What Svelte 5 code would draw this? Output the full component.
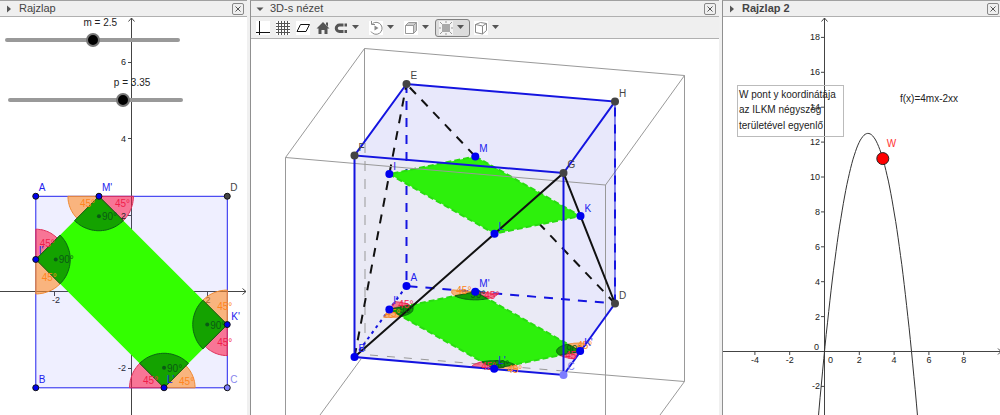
<style>
	:global(body) {
		margin: 0;
		background: #f0f0f0;
		font-family: 'Liberation Sans', Arial, sans-serif;
	}

	.views {
		display: grid;
		grid-template-columns: 247fr 469fr 278fr;
		gap: 3px;
	}

	.view {
		min-width: 0;
		background: #fff;
		border-top: 1px solid #a0a0a0;
	}

	.view + .view {
		border-left: 1px solid #909090;
	}

	header {
		display: flex;
		align-items: center;
		height: 15px;
		padding: 0 3px 0 4px;
		background: #efefef;
		border-bottom: 1px solid #b0b0b0;
	}

	h2 {
		flex: 1;
		margin: 0 0 0 5px;
		font-size: 11px;
		line-height: 15px;
		font-weight: normal;
		color: #444;
	}

	h2.active {
		font-weight: bold;
	}

	.view:last-child header {
		padding-right: 1px;
	}

	button {
		display: flex;
		align-items: center;
		box-sizing: border-box;
		padding: 0;
		border: 0;
		background: none;
	}

	button svg {
		display: block;
	}

	.close {
		justify-content: center;
		width: 12px;
		height: 12px;
		border: 1px solid #888;
		border-radius: 2px;
	}

	.toolbar {
		display: flex;
		align-items: center;
		height: 21px;
		padding-left: 5px;
		background: #efefef;
		border-bottom: 1px solid #b0b0b0;
	}

	.tools {
		display: flex;
		gap: 6px;
	}

	.menu-tool {
		gap: 4px;
		width: 35px;
		height: 18px;
		padding: 0 3px;
		border: 1px solid transparent;
		border-radius: 3px;
	}

	.menu-tool.selected {
		border-color: #808080;
		background: #dcdcdc;
	}

	.canvas {
		position: relative;
	}

	.canvas > svg {
		display: block;
		width: 100%;
		height: auto;
	}

	.slider {
		position: absolute;
	}

	.slider label {
		display: block;
		font-size: 10px;
		line-height: 12px;
		color: #222;
		white-space: nowrap;
	}

	input[type='range'] {
		display: block;
		width: 100%;
		height: 14px;
		margin: 4px 0 0;
		appearance: none;
		background: none;
	}

	input[type='range']::-webkit-slider-runnable-track {
		height: 4px;
		border-radius: 2px;
		background: #999;
	}

	input[type='range']::-webkit-slider-thumb {
		appearance: none;
		box-sizing: border-box;
		width: 14px;
		height: 14px;
		margin-top: -5px;
		border: 2px solid #777;
		border-radius: 50%;
		background: #000;
	}

	text {
		font-size: 10px;
		fill: #222;
	}

	.tick {
		font-size: 9px;
	}

	.end {
		text-anchor: end;
	}

	.middle {
		text-anchor: middle;
	}

	.axis {
		fill: none;
		stroke: #444;
	}

	.square {
		fill: rgba(100, 100, 255, 0.1);
		stroke: #2222ee;
	}

	.green {
		fill: #33ff00;
	}

	.right-angle {
		fill: rgba(0, 100, 0, 0.6);
		stroke: #0a6414;
	}

	.pink {
		fill: rgba(255, 16, 64, 0.55);
		stroke: #e0305a;
	}

	.orange {
		fill: rgba(255, 140, 40, 0.6);
		stroke: #f08a30;
	}

	.pink-text {
		fill: #f01e4b;
	}

	.orange-text {
		fill: #ff8420;
	}

	.green-text {
		fill: #0a5a14;
	}

	.blue-text {
		fill: #2222ee;
	}

	.gray-text {
		fill: #444;
	}

	.pale-text {
		fill: #8888ee;
	}

	.dot {
		stroke: #111;
	}

	.blue-dot {
		fill: #0000ee;
	}

	.gray-dot {
		fill: #444;
	}

	.pale-dot {
		fill: #7d7dff;
	}

	.frame {
		fill: none;
		stroke: #999;
	}

	.edge {
		fill: none;
		stroke: #1414e0;
		stroke-width: 2;
	}

	.line {
		fill: none;
		stroke: #111;
		stroke-width: 2;
	}

	.long-dash {
		stroke-dasharray: 9 8;
	}

	.short-dash {
		stroke-dasharray: 3 4;
	}

	.section {
		fill: #2df00c;
		stroke: #29dc10;
		stroke-width: 2;
		stroke-dasharray: 6 3;
	}

	.note {
		fill: none;
		stroke: #bbb;
	}

	.curve {
		fill: none;
		stroke: #333;
	}

	.w-point {
		fill: #f00;
		stroke: #222;
	}

	.w-text {
		fill: #f33;
	}
</style>

<script>
	let m = 2.5
	let p = 3.35

	// flat drawing: origin and pixels per unit
	const flat = ([x, y]) => [131.5 + x * 38.3, 292 - y * 38.3]
	const graph = ([x, y]) => [824.5 + x * 17.4, 351.5 - y * 17.45]

	const cube = {
		A: [406.5, 286], B: [354.5, 357], C: [563.5, 375], D: [615, 303.5],
		E: [406.5, 84], F: [354.5, 155.5], G: [563.5, 173], H: [615, 101.5]
	}

	const mix = (a, b, t) => [a[0] + (b[0] - a[0]) * t, a[1] + (b[1] - a[1]) * t]
	const poly = points => points.map(([x, y]) => x.toFixed(1) + ',' + y.toFixed(1)).join(' ')
	const face = names => poly(names.split('').map(n => cube[n]))

	const sector = ([cx, cy], from, to, r) => {
		const points = [[cx, cy]]
		for (let a = from; a <= to; a += 3) {
			points.push([cx + r * Math.cos(a * Math.PI / 180), cy + r * Math.sin(a * Math.PI / 180)])
		}
		return points
	}

	$: side = 2 * m
	$: t = Math.max(0, 1 - p / side)
	$: corners = [[-m, m], [-m, -m], [m, -m], [m, m]]

	// base plane of the cube, from the flat coordinates
	$: floor = ([x, y]) => {
		const u = (x + m) / side
		const v = (m - y) / side
		const {A, B, D} = cube
		return [
			A[0] + (D[0] - A[0]) * u + (B[0] - A[0]) * v,
			A[1] + (D[1] - A[1]) * u + (B[1] - A[1]) * v
		]
	}

	$: vertices = [
		{name: "M'", at: [-m + side * t, m], dir: 270, pinkR: 0.9, orangeR: 0.81, pink: [16, 11], orange: [-19, 11], label: [3, -5]},
		{name: "I'", at: [-m, m - side * t], dir: 0, pinkR: 0.79, orangeR: 0.9, pink: [4, -12], orange: [6, 22], label: [3, -5]},
		{name: "L'", at: [m - side * t, -m], dir: 90, pinkR: 0.9, orangeR: 0.81, pink: [-21, -4], orange: [15, -3], label: [3, -5]},
		{name: "K'", at: [m, -m + side * t], dir: 180, pinkR: 0.81, orangeR: 0.9, pink: [-10, 21], orange: [-10, -15], label: [4, -5]}
	]

	$: base = [vertices[0], vertices[3], vertices[2], vertices[1]].map(v => floor(v.at))
	$: upper = {
		M: mix(cube.E, cube.D, t),
		K: mix(cube.G, cube.D, t),
		L: mix(cube.G, cube.B, t),
		I: mix(cube.E, cube.B, t)
	}

	const baseText = [
		{pink: [9, 7], orange: [-19, 2], right: [-5, 6]},
		{pink: [9, -1], orange: [-4, 8], right: [10, 4]},
		{pink: [-13, 1], orange: [13, 4], right: [0, -1]},
		{pink: [-15, 8], orange: [-3, -2], right: [-14, 2]}
	]

	$: f = x => 4 * m * x - 2 * x * x
	$: curve = poly(Array.from({length: 141}, (_, i) => -2 + i * 0.07).map(x => graph([x, f(x)])))
	$: w = graph([p, f(p)])

	const thumbOffset = value => `margin-left: calc(${value / 5 * 92}% - 2px)`

	const flatLabels = [['A', 'blue'], ['B', 'blue'], ['C', 'pale'], ['D', 'gray']]
</script>

<main class="views">
	<section class="view">
		<header>
			<button aria-label="Stílussáv"><svg width="10" height="10"><path d="M3 1.500v7l4-3.500z" fill="#555"/></svg></button>
			<h2>Rajzlap</h2>
			<button class="close" aria-label="Bezárás"><svg width="8" height="8"><path d="M1.500 1.500l5 5m0-5l-5 5" stroke="#555"/></svg></button>
		</header>
		<div class="canvas">
			<svg viewBox="0 17 247 398">
				<path class="axis" d="M0 291.500H246M242.500 288.500l3.500 3-3.500 3M131.500 415V18M128.500 21.500l3-3.500 3 3.500"/>
				<path class="axis" d="M54.500 292v4M207.500 292v4M128 62.500h3M128 138.500h3M128 215.500h3M128 368.500h3"/>
				<text class="tick middle" x="56" y="303">-2</text>
				<text class="tick middle" x="208" y="303">2</text>
				<text class="tick end" x="126" y="65">6</text>
				<text class="tick end" x="126" y="142">4</text>
				<text class="tick end" x="126" y="371">-2</text>

				<polygon class="square" points={poly(corners.map(flat))}/>
				<polygon class="green" points={poly([vertices[0], vertices[3], vertices[2], vertices[1]].map(v => flat(v.at)))}/>
				{#each vertices as v}
					<polygon class="pink" points={poly(sector(v.at, v.dir + 45, v.dir + 90, v.pinkR).map(flat))}/>
					<polygon class="orange" points={poly(sector(v.at, v.dir - 90, v.dir - 45, v.orangeR).map(flat))}/>
					<polygon class="right-angle" points={poly(sector(v.at, v.dir - 45, v.dir + 45, 0.9).map(flat))}/>
				{/each}
				<text class="tick end" x="126" y="219">2</text>
				{#each vertices as v}
					{@const [x, y] = flat(v.at)}
					{@const dx = 20 * Math.cos(v.dir * Math.PI / 180)}
					{@const dy = -20 * Math.sin(v.dir * Math.PI / 180)}
					<circle cx={x + dx} cy={y + dy} r="2" fill="#0a5a14"/>
					<text class="green-text" x={x + dx + 3} y={y + dy + 4}>90°</text>
					<text class="pink-text" x={x + v.pink[0]} y={y + v.pink[1]}>45°</text>
					<text class="orange-text" x={x + v.orange[0]} y={y + v.orange[1]}>45°</text>
					<circle class="dot blue-dot" cx={x} cy={y} r="3"/>
					<text class="blue-text" x={x + v.label[0]} y={y + v.label[1]}>{v.name}</text>
				{/each}
				{#each flatLabels as [name, tone], i}
					{@const [x, y] = flat(corners[i])}
					<circle class="dot {tone}-dot" cx={x} cy={y} r="3"/>
					<text class="{tone}-text" x={x + 3} y={y - 5}>{name}</text>
				{/each}
			</svg>
			<div class="slider" style="left: {5 / 2.47}%; top: 0%; width: {175 / 2.47}%">
				<label for="m" style={thumbOffset(m)}>m = {m}</label>
				<input id="m" type="range" min="0" max="5" step="0.05" bind:value={m}>
			</div>
			<div class="slider" style="left: {8 / 2.47}%; top: {60 / 3.98}%; width: {175 / 2.47}%">
				<label for="p" style={thumbOffset(p)}>p = {p}</label>
				<input id="p" type="range" min="0" max="5" step="0.05" bind:value={p}>
			</div>
		</div>
	</section>

	<section class="view">
		<header>
			<button aria-label="Stílussáv"><svg width="10" height="10"><path d="M1.500 3.500h7L5 7z" fill="#555"/></svg></button>
			<h2>3D-s nézet</h2>
			<button class="close" aria-label="Bezárás"><svg width="8" height="8"><path d="M1.500 1.500l5 5m0-5l-5 5" stroke="#555"/></svg></button>
		</header>
		<div class="toolbar">
			<div class="tools">
				<button aria-label="Tengelyek"><svg width="14" height="14"><path d="M0 0h14v14H0z" fill="#fff"/><path d="M3.500 0v14M0 11.500h14" stroke="#111"/></svg></button>
				<button aria-label="Rács"><svg width="14" height="14"><path d="M0 0h14v14H0z" fill="#fff"/><path d="M2.500 0v14M5.500 0v14M8.500 0v14M11.500 0v14M0 2.500h14M0 5.500h14M0 8.500h14M0 11.500h14" stroke="#555"/></svg></button>
				<button aria-label="Sík"><svg width="14" height="14"><path d="M0 0h14v14H0z" fill="#fff"/><path d="M4.500 3.500h9l-3.500 7H1z" fill="none" stroke="#111"/></svg></button>
				<button aria-label="Alapnézet"><svg width="14" height="14"><path d="M7 1l6.500 6.500H11.500V13H8.500V9h-3v4h-3V7.500H.5zM10 1.500h2v4l-2-2z" fill="#555"/></svg></button>
			</div>
			<button class="menu-tool" aria-label="Illesztés">
				<svg width="14" height="14"><path d="M13 4H5.500a3.250 3.250 0 0 0 0 6.500H13" fill="none" stroke="#555" stroke-width="3"/><path d="M10 2v11" stroke="#efefef"/></svg>
				<svg width="7" height="5"><path d="M0 0h7L3.500 4z" fill="#555"/></svg>
			</button>
			<button class="menu-tool" aria-label="Forgatás">
				<svg width="14" height="14"><path d="M0 0h14v14H0z" fill="#fff"/><path d="M3.500 2.500a6 6 0 1 1-1.500 8M2.500 0v3.500H6" fill="none" stroke="#888"/><path d="M5.500 4.500v5l4-2.500z" fill="#888"/></svg>
				<svg width="7" height="5"><path d="M0 0h7L3.500 4z" fill="#555"/></svg>
			</button>
			<button class="menu-tool" aria-label="Nézet iránya">
				<svg width="14" height="14"><path d="M0 0h14v14H0z" fill="#fff"/><path d="M1.500 4.500l3-3h8v8l-3 3h-8z" fill="#ccc" stroke="#999"/><path d="M2 5h7v7H2z" fill="#fff"/><path d="M1.500 4.500h8v8M9.500 4.500l3-3" fill="none" stroke="#999"/></svg>
				<svg width="7" height="5"><path d="M0 0h7L3.500 4z" fill="#555"/></svg>
			</button>
			<button class="menu-tool selected" aria-label="Vágás">
				<svg width="14" height="14"><path d="M0 0h14v14H0z" fill="#f4f4f4"/><path d="M3 3h8v8H3z" fill="#aaa"/><path d="M7 0v2M7 12v2M0 7h2M12 7h2M1 1l2 2M13 1l-2 2M1 13l2-2M13 13l-2-2" stroke="#999"/></svg>
				<svg width="7" height="5"><path d="M0 0h7L3.500 4z" fill="#555"/></svg>
			</button>
			<button class="menu-tool" aria-label="Vetítés">
				<svg width="14" height="14"><path d="M0 0h14v14H0z" fill="#fff"/><path d="M1.500 3.500l5-2 6 1v7l-4 3.500-7-1.500zM1.500 3.500l7 1.500 4-2.500M8.500 5v8" fill="none" stroke="#888"/></svg>
				<svg width="7" height="5"><path d="M0 0h7L3.500 4z" fill="#555"/></svg>
			</button>
		</div>
		<div class="canvas">
			<svg viewBox="251 39 468 376">
				<polygon points={face('EHDCBF')} fill="#e8e8fb"/>
				<polygon points={face('FGCB')} fill="#eaeaf5"/>
				<path class="frame" d="M365 143V354.500" stroke-dasharray="10 8"/>
				<path class="frame" d="M370 355L563 371" stroke-dasharray="8 9"/>
				<path class="frame" d="M364.500 143V48.500L285.500 157.500V415M364.500 48.500L684.500 75.500V381.500L660 415M684.500 75.500L605.500 185V415M563.500 371.500L684.500 381.500M361 359L320 415"/>

				<polyline class="edge long-dash" points={face('EAD')}/>
				<polyline class="edge short-dash" points={face('AB')}/>
				<polyline class="line long-dash" points={face('BE')}/>
				<polyline class="line long-dash" points={face('DE')}/>

				<polygon class="section" points={poly(base)}/>
				{#each vertices as v}
					<polygon class="pink" points={poly(sector(v.at, v.dir + 45, v.dir + 90, 0.55).map(floor))}/>
					<polygon class="orange" points={poly(sector(v.at, v.dir - 90, v.dir - 45, 0.55).map(floor))}/>
					<polygon class="right-angle" points={poly(sector(v.at, v.dir - 45, v.dir + 45, 0.55).map(floor))}/>
				{/each}
				<polygon class="section" points={poly(Object.values(upper))}/>

				<path class="frame" d="M285.500 157.500L605.500 185"/>
				<polygon class="edge" points={face('EFGH')}/>
				<polyline class="edge" points={face('FBCG')}/>
				<polyline class="edge" points={face('CD')}/>
				<polyline class="edge" points={face('DH')} stroke-opacity="0.5"/>
				<polyline class="edge long-dash" points={face('DH')}/>
				<polyline class="line" points={face('BGD')}/>

				{#each vertices as v, i}
					{@const [x, y] = floor(v.at)}
					{@const text = baseText[i]}
					<text class="green-text" x={x + text.right[0]} y={y + text.right[1]}>90°</text>
					<text class="pink-text" x={x + text.pink[0]} y={y + text.pink[1]}>45°</text>
					<text class="orange-text" x={x + text.orange[0]} y={y + text.orange[1]}>45°</text>
					<circle class="blue-dot" cx={x} cy={y} r="4"/>
					<text class="blue-text" x={x + 4} y={y - 5}>{v.name}</text>
				{/each}
				{#each Object.entries(upper) as [name, [x, y]]}
					<circle class="blue-dot" cx={x} cy={y} r="4"/>
					<text class="blue-text" x={x + 4} y={y - 4}>{name}</text>
				{/each}
				{#each Object.entries(cube) as [name, [x, y]]}
					{@const tone = name === 'C' ? 'pale' : 'AB'.includes(name) ? 'blue' : 'gray'}
					<text class="{tone}-text" x={x + 4} y={y - 5}>{name}</text>
					<circle class="{'AB'.includes(name) ? 'blue' : tone}-dot" cx={x} cy={y} r="4"/>
				{/each}
			</svg>
		</div>
	</section>

	<section class="view">
		<header>
			<button aria-label="Stílussáv"><svg width="10" height="10"><path d="M3 1.500v7l4-3.500z" fill="#555"/></svg></button>
			<h2 class="active">Rajzlap 2</h2>
			<button class="close" aria-label="Bezárás"><svg width="8" height="8"><path d="M1.500 1.500l5 5m0-5l-5 5" stroke="#555"/></svg></button>
		</header>
		<div class="canvas">
			<svg viewBox="723 17 277 398">
				<path class="axis" d="M723 351.500H1000M998 348.500l3 3-3 3M824.500 415V18M821.500 21.500l3-3.500 3 3.500"/>
				{#each [-2, 2, 4, 6, 8, 10, 12, 14, 16, 18] as n}
					{@const y = graph([0, n])[1]}
					<path class="axis" d="M821 {y}h3"/>
					<text class="tick end" x="820" y={y + 3}>{n}</text>
				{/each}
				{#each [-4, -2, 2, 4, 6, 8] as n}
					{@const x = graph([n, 0])[0]}
					<path class="axis" d="M{x} 352v3"/>
					<text class="tick middle" x={x} y="363">{n}</text>
				{/each}
				<text class="tick end" x="819" y="350">0</text>
				<text class="tick" x="828" y="363">0</text>
				<polyline class="curve" points={curve}/>
				<rect class="note" x="737.500" y="85.500" width="106" height="51"/>
				<text x="739" y="98">W pont y koordinátája</text>
				<text x="739" y="113">az ILKM négyszög</text>
				<text x="739" y="129">területével egyenlő</text>
				<text x="900" y="102">f(x)=4mx-2xx</text>
				<circle class="w-point" cx={w[0]} cy={w[1]} r="6"/>
				<text class="w-text" x={w[0] + 4} y={w[1] - 12}>W</text>
			</svg>
		</div>
	</section>
</main>
